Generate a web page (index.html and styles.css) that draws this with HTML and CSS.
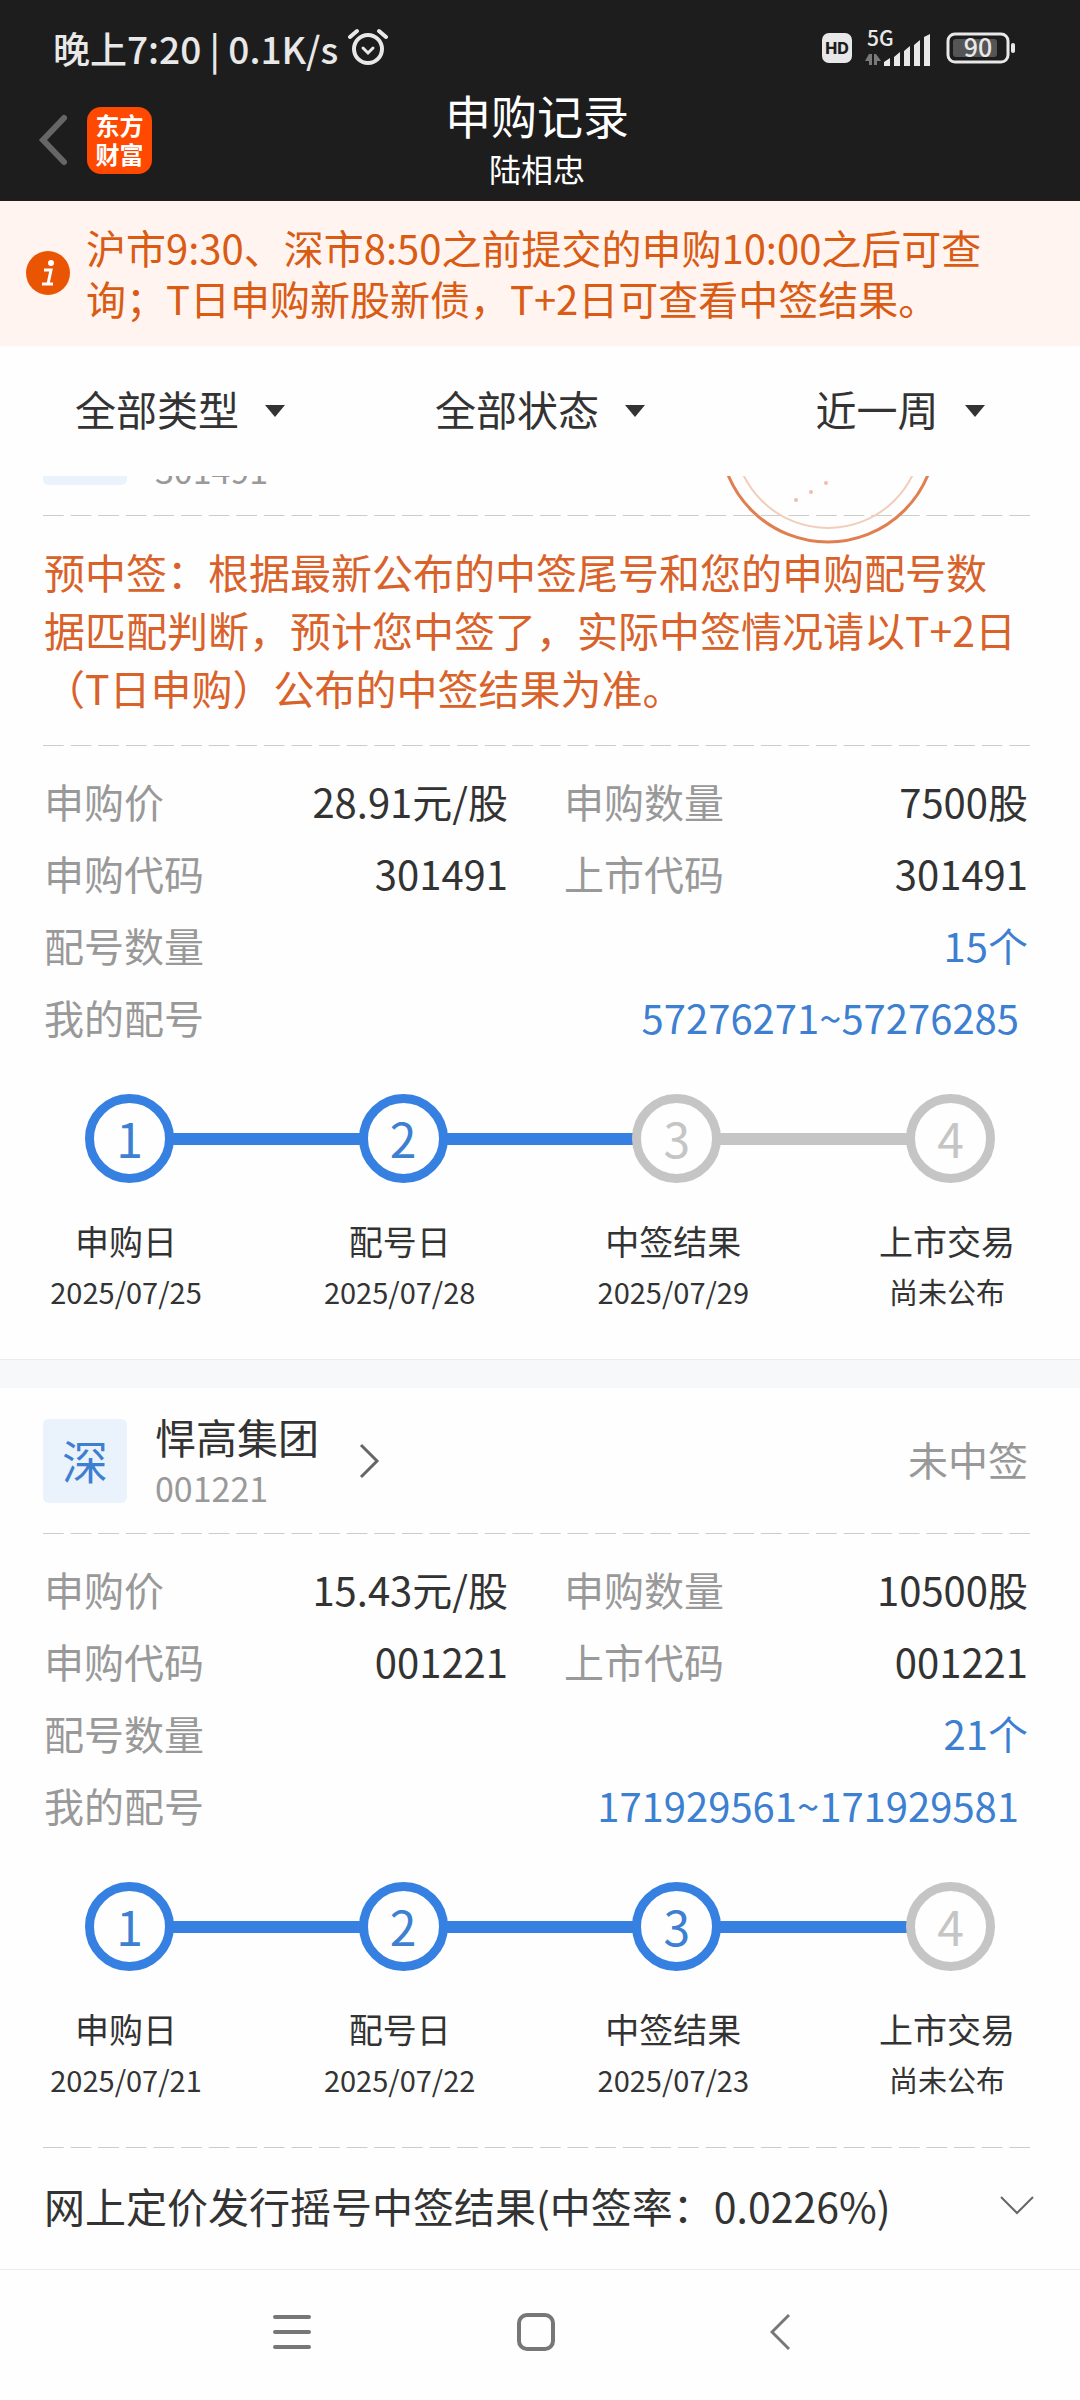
FILE: index.html
```html
<!DOCTYPE html>
<html lang="zh-CN">
<head>
  <meta charset="UTF-8">
  <meta name="viewport" content="width=device-width, initial-scale=1.0">
  <title>申购记录</title>
  <link rel="stylesheet" href="styles.css">
</head>
<body>
  <header class="top">
    <div class="status-bar">
      <div class="status-left">
        <span>晚上7:20 | 0.1K/s</span>
        <svg class="alarm" width="40" height="40" viewBox="0 0 40 40" fill="none" stroke="#e8e8e8" stroke-linecap="round">
          <circle cx="20" cy="21" r="14" stroke-width="4"/>
          <path d="M2 9L9 3M31 3L38 9" stroke-width="4"/>
          <path d="M15 20L20 25L25 20" stroke-width="3"/>
        </svg>
      </div>
      <div class="status-right">
        <span class="hd">HD</span>
        <svg class="signal" width="68" height="36" viewBox="0 0 68 36" fill="#e8e8e8">
          <text x="2" y="16" class="net">5G</text>
          <path d="M4 24V35H7V24ZM4 24L0 31H5ZM9 24V35H12V31H16L11 24Z" fill="#7a7a7a"/>
          <path d="M19 32L25 28V36H19ZM29 27L35 22V36H29ZM39 21L45 16V36H39ZM49 15L55 10V36H49ZM59 7L65 4V36H59Z"/>
        </svg>
        <svg class="signal" width="70" height="32" viewBox="0 0 70 32">
          <rect x="2" y="2" width="60" height="28" rx="7" fill="none" stroke="#e8e8e8" stroke-width="3"/>
          <rect x="7" y="7" width="44" height="18" rx="3" fill="#555"/>
          <rect x="65" y="11" width="4" height="10" rx="2" fill="#e8e8e8"/>
          <text x="32" y="25" class="battery">90</text>
        </svg>
      </div>
    </div>
    <div class="nav-bar">
      <div class="nav-left">
        <button type="button" class="icon-btn" aria-label="返回">
          <svg width="30" height="52" viewBox="0 0 30 52" fill="none" stroke="#666" stroke-width="6" stroke-linecap="round">
            <path d="M26 4L5 26L26 48"/>
          </svg>
        </button>
        <a href="#" class="logo">东方<br>财富</a>
      </div>
      <div class="nav-title">
        <h1>申购记录</h1>
        <p>陆相忠</p>
      </div>
    </div>
  </header>

  <div class="tip">
    <svg class="tip-icon" width="44" height="44" viewBox="0 0 44 44">
      <circle cx="22" cy="22" r="22" fill="#ea5504"/>
      <circle cx="25" cy="12" r="3" fill="#fff"/>
      <path d="M18 19H25L22 33M16 33H27" fill="none" stroke="#fff" stroke-width="3"/>
    </svg>
    <p>沪市9:30、深市8:50之前提交的申购10:00之后可查询；T日申购新股新债，T+2日可查看中签结果。</p>
  </div>

  <div class="filters">
    <label class="filter"><select aria-label="类型"><option>全部类型</option></select></label>
    <label class="filter"><select aria-label="状态"><option>全部状态</option></select></label>
    <label class="filter"><select aria-label="时间"><option>近一周</option></select></label>
  </div>

  <main class="list">
    <section class="card card-scrolled">
      <div class="card-head">
        <span class="badge"></span>
        <div class="stock">
          <span class="code">301491</span>
        </div>
        <svg class="stamp" width="220" height="220" viewBox="0 0 220 220" fill="none">
          <circle cx="110" cy="110" r="108" stroke="#e07f50" stroke-width="3"/>
          <circle cx="110" cy="110" r="94" stroke="#f2cdbb" stroke-width="2"/>
          <g fill="#efbfa8">
            <circle cx="78" cy="176" r="2"/>
            <circle cx="93" cy="168" r="2"/>
            <circle cx="108" cy="159" r="2"/>
            <circle cx="123" cy="150" r="2"/>
          </g>
        </svg>
      </div>
      <div class="dash"></div>
      <p class="notice">预中签：根据最新公布的中签尾号和您的申购配号数据匹配判断，预计您中签了，实际中签情况请以T+2日（T日申购）公布的中签结果为准。</p>
      <div class="dash"></div>
      <dl class="info">
        <div class="item"><dt>申购价</dt><dd>28.91元/股</dd></div>
        <div class="item"><dt>申购数量</dt><dd>7500股</dd></div>
        <div class="item"><dt>申购代码</dt><dd>301491</dd></div>
        <div class="item"><dt>上市代码</dt><dd>301491</dd></div>
        <div class="item wide"><dt>配号数量</dt><dd><a href="#">15个</a></dd></div>
        <div class="item wide"><dt>我的配号</dt><dd class="range"><a href="#">57276271~57276285</a></dd></div>
      </dl>
      <div class="track">
        <span class="dot on">1</span>
        <span class="bar on"></span>
        <span class="dot on">2</span>
        <span class="bar on"></span>
        <span class="dot">3</span>
        <span class="bar"></span>
        <span class="dot">4</span>
      </div>
      <ol class="steps">
        <li><b>申购日</b><span>2025/07/25</span></li>
        <li><b>配号日</b><span>2025/07/28</span></li>
        <li><b>中签结果</b><span>2025/07/29</span></li>
        <li><b>上市交易</b><span>尚未公布</span></li>
      </ol>
    </section>

    <section class="card">
      <div class="card-head">
        <span class="badge">深</span>
        <div class="stock">
          <span class="name">悍高集团</span>
          <span class="code">001221</span>
        </div>
        <button type="button" class="icon-btn" aria-label="详情">
          <svg width="22" height="36" viewBox="0 0 22 36" fill="none" stroke="#666" stroke-width="3">
            <path d="M2 2L18 18L2 34"/>
          </svg>
        </button>
        <span class="result">未中签</span>
      </div>
      <div class="dash"></div>
      <dl class="info">
        <div class="item"><dt>申购价</dt><dd>15.43元/股</dd></div>
        <div class="item"><dt>申购数量</dt><dd>10500股</dd></div>
        <div class="item"><dt>申购代码</dt><dd>001221</dd></div>
        <div class="item"><dt>上市代码</dt><dd>001221</dd></div>
        <div class="item wide"><dt>配号数量</dt><dd><a href="#">21个</a></dd></div>
        <div class="item wide"><dt>我的配号</dt><dd class="range"><a href="#">171929561~171929581</a></dd></div>
      </dl>
      <div class="track">
        <span class="dot on">1</span>
        <span class="bar on"></span>
        <span class="dot on">2</span>
        <span class="bar on"></span>
        <span class="dot on">3</span>
        <span class="bar on"></span>
        <span class="dot">4</span>
      </div>
      <ol class="steps">
        <li><b>申购日</b><span>2025/07/21</span></li>
        <li><b>配号日</b><span>2025/07/22</span></li>
        <li><b>中签结果</b><span>2025/07/23</span></li>
        <li><b>上市交易</b><span>尚未公布</span></li>
      </ol>
      <div class="dash"></div>
      <button type="button" class="more">
        <span>网上定价发行摇号中签结果(中签率：0.0226%)</span>
        <svg width="34" height="20" viewBox="0 0 34 20" fill="none" stroke="#666" stroke-width="2">
          <path d="M1 2L17 18L33 2"/>
        </svg>
      </button>
    </section>
  </main>

  <nav class="system-nav">
    <button type="button" class="icon-btn" aria-label="最近任务">
      <svg width="38" height="38" viewBox="0 0 38 38" stroke="#777" stroke-width="4" stroke-linecap="round">
        <path d="M2 4H36M2 19H36M2 34H36"/>
      </svg>
    </button>
    <button type="button" class="icon-btn" aria-label="主页">
      <svg width="38" height="38" viewBox="0 0 38 38" fill="none" stroke="#777" stroke-width="4">
        <rect x="2" y="2" width="34" height="34" rx="8"/>
      </svg>
    </button>
    <button type="button" class="icon-btn" aria-label="后退">
      <svg width="20" height="38" viewBox="0 0 20 38" fill="none" stroke="#777" stroke-width="3">
        <path d="M19 2L2 19L19 36"/>
      </svg>
    </button>
  </nav>
</body>
</html>
```
FILE: styles.css
```css
* {
  box-sizing: border-box;
}

body {
  margin: 0;
  min-height: 100vh;
  display: flex;
  flex-direction: column;
  font-family: "Noto Sans CJK SC", sans-serif;
  font-size: 41px;
  color: #333;
  background-color: #fefefe;
}

h1, p, dl, dd, ol {
  margin: 0;
  padding: 0;
}

a {
  color: inherit;
  text-decoration: none;
}

button, select {
  font: inherit;
  color: inherit;
  border: none;
  background: none;
  padding: 0;
  cursor: pointer;
}

svg {
  display: block;
}

.icon-btn {
  display: flex;
  align-items: center;
  justify-content: center;
}

/* header */
.top {
  background-color: #1d1d1d;
  color: #fff;
  padding-bottom: 7px;
}

.status-bar {
  display: flex;
  justify-content: space-between;
  align-items: center;
  height: 86px;
  padding: 10px 64px 0 53px;
  color: #e8e8e8;
}

.status-left, .status-right {
  display: flex;
  align-items: center;
}

.status-left {
  font-size: 37px;
  font-weight: 500;
  gap: 10px;
}

.status-right {
  gap: 13px;
}

.hd {
  width: 30px;
  height: 30px;
  border-radius: 7px;
  background-color: #e8e8e8;
  color: #1d1d1d;
  font-family: Inter, sans-serif;
  font-size: 16px;
  font-weight: 800;
  line-height: 30px;
  text-align: center;
}

.signal {
  overflow: visible;
}

.net {
  font-size: 21px;
  font-weight: 500;
}

.battery {
  font-size: 25px;
  font-weight: 500;
  fill: #e8e8e8;
  text-anchor: middle;
}

.nav-bar {
  display: grid;
  grid-template-columns: 1fr auto 1fr;
  align-items: center;
  padding: 0 44px 0 38px;
}

.nav-left {
  display: flex;
  align-items: center;
  gap: 19px;
}

.logo {
  width: 65px;
  height: 67px;
  padding-top: 3px;
  border-radius: 14px;
  background-color: #ff4800;
  font-size: 24px;
  font-weight: 700;
  line-height: 29px;
  text-align: center;
}

.nav-title {
  text-align: center;
}

.nav-title h1 {
  font-size: 46px;
  font-weight: 400;
  line-height: 56px;
}

.nav-title p {
  font-size: 32px;
  line-height: 52px;
}

/* tip */
.tip {
  display: flex;
  align-items: center;
  gap: 16px;
  padding: 21px 70px 22px 26px;
  background-color: #fff4ef;
  color: #d95b14;
}

.tip-icon {
  flex: none;
}

.tip p {
  font-size: 40px;
  line-height: 51px;
}

/* filters */
.filters {
  display: grid;
  grid-template-columns: repeat(3, 1fr);
  height: 130px;
}

.filter {
  display: flex;
  align-items: center;
  justify-content: center;
  gap: 26px;
}

.filter select {
  appearance: none;
  line-height: 60px;
  padding-bottom: 6px;
}

.filter::after {
  content: "";
  border: 10px solid transparent;
  border-top: 12px solid #333;
  border-bottom: none;
}

/* list */
.list {
  flex: 1;
  overflow: hidden;
}

.card + .card {
  border-top: 1px solid #e8ecee;
  box-shadow: inset 0 28px #f6f8fa;
  padding-top: 29px;
}

/* list is scrolled, the first card starts under the filters */
.card-scrolled {
  margin-top: -105px;
}

.card-head {
  position: relative;
  display: flex;
  align-items: center;
  height: 144px;
  padding: 0 52px 0 43px;
}

.badge {
  width: 84px;
  height: 84px;
  margin-right: 28px;
  border-radius: 6px;
  background-color: #eaf2fb;
  color: #3d7fd0;
  font-size: 46px;
  line-height: 80px;
  text-align: center;
}

.stock {
  display: flex;
  flex-direction: column;
  justify-content: flex-end;
  height: 104px;
  margin-right: 40px;
  padding-bottom: 1px;
}

.name {
  line-height: 55px;
}

.code {
  font-size: 34px;
  line-height: 48px;
  color: #999;
}

.result {
  margin-left: auto;
  padding-bottom: 4px;
  font-size: 40px;
  color: #999;
}

.stamp {
  position: absolute;
  top: -47px;
  right: 142px;
}

.dash {
  height: 1px;
  margin: 0 50px 0 43px;
  /* 36 dashes, 7px apart */
  background: linear-gradient(to right, #ccc 75%, transparent 75%) 0 0 / calc((100% + 7px) / 36) 1px repeat-x;
}

.notice {
  padding: 26px 58px 29px 44px;
  line-height: 58px;
  color: #d9622b;
}

.info {
  display: grid;
  grid-template-columns: 1fr 1fr;
  column-gap: 56px;
  padding: 19px 52px 0 44px;
  font-size: 40px;
  line-height: 72px;
}

.item {
  display: flex;
  justify-content: space-between;
}

.wide {
  grid-column: 1 / 3;
}

.item dt {
  color: #999;
}

.item a {
  color: #3d7fd0;
}

.range {
  padding-right: 9px;
}

.track {
  display: flex;
  align-items: center;
  padding: 41px 85px 0;
}

.dot {
  width: 89px;
  height: 89px;
  border: 9px solid #c5c5c5;
  border-radius: 50%;
  color: #c5c5c5;
  font-size: 48px;
  line-height: 68px;
  text-align: center;
}

.bar {
  flex: 1;
  height: 12px;
  margin: 0 -2px;
  background-color: #c5c5c5;
}

.dot.on {
  border-color: #3580e0;
  color: #3d7fd0;
}

.bar.on {
  background-color: #3580e0;
}

.steps {
  display: flex;
  justify-content: space-between;
  padding: 33px 43px 43px 36px;
  list-style: none;
}

.steps li {
  display: flex;
  flex-direction: column;
  width: 180px;
  text-align: center;
}

.steps b {
  font-size: 34px;
  font-weight: 400;
  line-height: 50px;
}

.steps span {
  font-size: 29px;
  line-height: 50px;
}

.more {
  display: flex;
  justify-content: space-between;
  align-items: center;
  width: 100%;
  height: 120px;
  padding: 0 46px 7px 44px;
}

/* system navigation */
.system-nav {
  display: grid;
  grid-template-columns: repeat(3, 1fr);
  height: 131px;
  padding: 0 178px 6px 170px;
  border-top: 1px solid #ebebeb;
}
```
